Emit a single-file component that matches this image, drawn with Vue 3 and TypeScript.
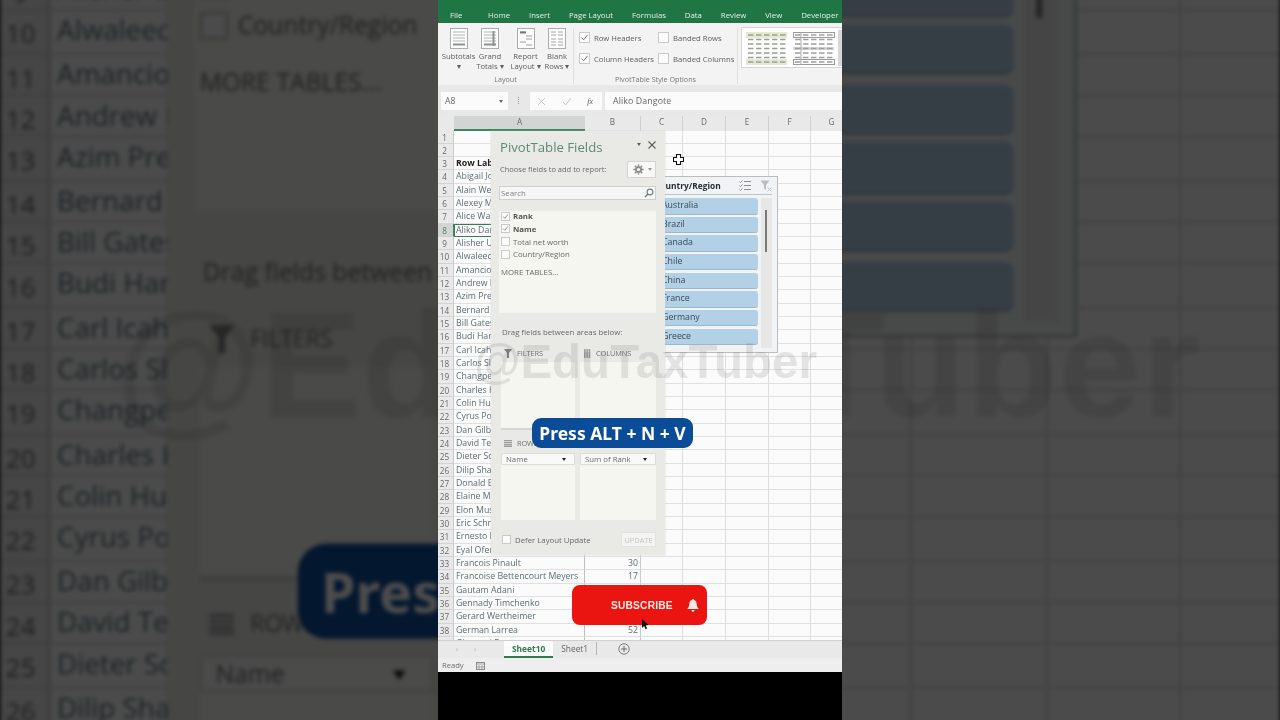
<script setup lang="ts">
const layers: string[] = ['back', 'front']
const tabs: string[] = ['File', 'Home', 'Insert', 'Page Layout', 'Formulas', 'Data', 'Review', 'View', 'Developer']
const names: string[] = ['', '', 'Row Labels', 'Abigail Johnson', 'Alain Wertheimer', 'Alexey Mordashov', 'Alice Walton', 'Aliko Dangote', 'Alisher Usmanov', 'Alwaleed Bin Talal', 'Amancio Ortega', 'Andrew Forrest', 'Azim Premji', 'Bernard Arnault', 'Bill Gates', 'Budi Hartono', 'Carl Icahn', 'Carlos Slim', 'Changpeng Zhao', 'Charles Koch', 'Colin Huang', 'Cyrus Poonawalla', 'Dan Gilbert', 'David Tepper', 'Dieter Schwarz', 'Dilip Shanghvi', 'Donald Bren', 'Elaine Marshall', 'Elon Musk', 'Eric Schmidt', 'Ernesto Bertarelli', 'Eyal Ofer', 'Francois Pinault', 'Francoise Bettencourt Meyers', 'Gautam Adani', 'Gennady Timchenko', 'Gerard Wertheimer', 'German Larrea', 'Giovanni Ferrero']
const values: Record<number, string> = { 33: '30', 34: '17', 38: '52' }
const cols: string[] = ['A', 'B', 'C', 'D', 'E', 'F', 'G']
const countries: string[] = ['Australia', 'Brazil', 'Canada', 'Chile', 'China', 'France', 'Germany', 'Greece']
const fields = [
  { label: 'Rank', on: true },
  { label: 'Name', on: true },
  { label: 'Total net worth', on: false },
  { label: 'Country/Region', on: false }
]
const buttons = [
  { top: 'Subtotals', bottom: '▾', kind: 'sub' },
  { top: 'Grand', bottom: 'Totals ▾', kind: 'grand' },
  { top: 'Report', bottom: 'Layout ▾', kind: 'report' },
  { top: 'Blank', bottom: 'Rows ▾', kind: 'blank' }
]
const dashRows: number[] = [5, 9.5, 14, 18.5, 23, 27.5, 32]
</script>

<template>
  <div class="stage">
    <div v-for="layer in layers" :key="layer" class="frame" :class="layer">
      <nav class="tabbar">
        <span v-for="t in tabs" :key="t" class="tab">{{ t }}</span>
      </nav>

      <section class="ribbon">
        <div class="group layout-group">
          <div class="btns">
            <div v-for="b in buttons" :key="b.kind" class="rbtn" :class="b.kind">
              <svg width="18" height="21" viewBox="0 0 18 21">
                <rect x=".5" y=".5" width="17" height="20" fill="#fbfbfb" stroke="#a9adab" />
                <g v-if="b.kind === 'sub' || b.kind === 'grand'" stroke="#b4b8b6" stroke-width="1">
                  <path d="M3 4h12M3 7h12M3 10h12M3 13h12" />
                  <path d="M3 16.5h12" stroke="#8d9290" stroke-width="2" />
                  <path v-if="b.kind === 'grand'" d="M12.5 3v15" stroke="#8d9290" stroke-width="2" />
                </g>
                <g v-else-if="b.kind === 'report'" stroke="#9ca09e">
                  <path d="M3 4h6M9 8h6M9 11h6M3 14h6M9 17h6" />
                  <path d="M3 4.5h6" stroke-width="2" stroke="#777b79" />
                </g>
                <g v-else stroke="#a5a9a7">
                  <path d="M3 4h5M10 4h5M3 7h5M10 7h5M3 11h5M10 11h5M3 14h5M10 14h5M3 17h5M10 17h5" />
                </g>
              </svg>
              <span class="rlabel">{{ b.top }}</span>
              <span class="rlabel">{{ b.bottom }}</span>
            </div>
          </div>
          <span class="gname">Layout</span>
        </div>

        <div class="group style-group">
          <div class="opts">
            <label class="opt"><i class="cb on"><svg width="9" height="9" viewBox="0 0 9 9"><path d="M1.5 4.6 3.6 6.8 7.6 1.8" fill="none" stroke="#777" /></svg></i>Row Headers</label>
            <label class="opt"><i class="cb"></i>Banded Rows</label>
            <label class="opt"><i class="cb on"><svg width="9" height="9" viewBox="0 0 9 9"><path d="M1.5 4.6 3.6 6.8 7.6 1.8" fill="none" stroke="#777" /></svg></i>Column Headers</label>
            <label class="opt"><i class="cb"></i>Banded Columns</label>
          </div>
          <span class="gname">PivotTable Style Options</span>
        </div>

        <div class="gallery">
          <svg class="thumb" width="45" height="36" viewBox="0 0 45 36">
            <rect x="1" y="2" width="41" height="6" fill="#e4ead2" />
            <rect x="1" y="29" width="41" height="6" fill="#e4ead2" />
            <line v-for="y in dashRows" :key="y" x1="3" x2="42" :y1="y" :y2="y" stroke="#9aa096" stroke-width="1.6" stroke-dasharray="5.5 2.5" />
          </svg>
          <svg class="thumb" width="45" height="36" viewBox="0 0 45 36">
            <rect x="1.5" y="2.5" width="41" height="5" fill="none" stroke="#999" />
            <rect x="1.5" y="29.5" width="41" height="5" fill="none" stroke="#999" />
            <rect x="1" y="17" width="41" height="3" fill="#d4d6d5" />
            <line x1="9" x2="9" y1="2" y2="35" stroke="#aaa" />
            <line v-for="y in dashRows" :key="y" x1="3" x2="42" :y1="y" :y2="y" stroke="#9c9f9d" stroke-width="1.6" stroke-dasharray="5.5 2.5" />
          </svg>
          <span class="thumb-third"></span>
        </div>
      </section>

      <section class="formula">
        <div class="namebox"><span>A8</span><b class="caret"></b></div>
        <span class="fdots"></span>
        <div class="fxbox">
          <svg width="9" height="9" viewBox="0 0 9 9"><path d="M1 1 8 8M8 1 1 8" stroke="#c4c4c4" /></svg>
          <svg width="10" height="9" viewBox="0 0 10 9"><path d="M1 5 3.500 8 9 1" fill="none" stroke="#c4c4c4" /></svg>
          <em>fx</em>
        </div>
        <div class="finput">Aliko Dangote</div>
      </section>

      <div class="colhead">
        <span class="corner"></span>
        <span v-for="c in cols" :key="c" class="ch" :class="'c' + c">{{ c }}</span>
      </div>

      <div class="grid">
        <div v-for="(name, i) in names" :key="i" class="row" :class="{ selrow: i === 7 }">
          <span class="rh">{{ i + 1 }}</span>
          <span class="cell cA" :class="{ head: i === 2, sel: i === 7 }">{{ name }}</span>
          <span class="cell cB">{{ values[i + 1] }}</span>
          <span class="cell cC"></span>
          <span class="cell cD"></span>
          <span class="cell cE"></span>
          <span class="cell cF"></span>
          <span class="cell cG"></span>
        </div>
      </div>

      <footer class="sheets">
        <span class="nav">‹</span><span class="nav">›</span>
        <span class="stab active">Sheet10</span>
        <span class="stab">Sheet1</span>
        <span class="sdiv"></span>
        <svg class="plus" width="12" height="12" viewBox="0 0 12 12"><circle cx="6" cy="6" r="5.2" fill="none" stroke="#7d7d7d" /><path d="M6 3v6M3 6h6" stroke="#6d6d6d" /></svg>
      </footer>
      <footer class="status">
        <span>Ready</span>
        <svg width="9" height="9" viewBox="0 0 9 9"><rect x=".5" y="1.500" width="8" height="7" fill="none" stroke="#8a8a8a" /><path d="M1 3h7M3 4v4M6 4v4M1 6h7" stroke="#8a8a8a" stroke-width=".7" /></svg>
      </footer>
      <div class="blackout"></div>

      <!-- floating over the sheet -->
      <aside class="slicer">
        <header class="slhead">
          <b>Country/Region</b>
          <svg class="slicon" width="12" height="11" viewBox="0 0 12 11"><path d="M5 1.500h7M5 5.500h7M5 9.500h7M.5 1.500l1 1 2-2M.5 5.500l1 1 2-2M.5 9.500l1 1 2-2" fill="none" stroke="#8b9097" /></svg>
          <svg class="slicon" width="12" height="12" viewBox="0 0 12 12"><path d="M.5 .5h9L6 5v5L4 8.500V5Z" fill="#b9bcc0" /><path d="M7.500 7.500l4 4M11.500 7.500l-4 4" stroke="#c5c7ca" /></svg>
        </header>
        <div class="slbody">
          <ul class="sllist">
            <li v-for="c in countries" :key="c">{{ c }}</li>
          </ul>
          <div class="sltrack"><span class="slthumb"></span></div>
        </div>
      </aside>

      <aside class="pane">
        <header class="phead">
          <h1>PivotTable Fields</h1>
          <b class="pcaret"></b>
          <svg width="8" height="8" viewBox="0 0 8 8"><path d="M.5 .5l7 7M7.500 .5l-7 7" stroke="#5f5f5f" stroke-width="1.100" /></svg>
        </header>
        <div class="pchoose">
          <span>Choose fields to add to report:</span>
          <div class="gear">
            <svg width="11" height="11" viewBox="0 0 11 11"><circle cx="5.500" cy="5.500" r="2.600" fill="none" stroke="#8f9190" stroke-width="2" /><path d="M5.500 .3v2M5.500 8.700v2M.3 5.500h2M8.700 5.500h2M1.800 1.800l1.400 1.400M7.800 7.800l1.400 1.400M1.800 9.200l1.400-1.400M7.800 3.200l1.400-1.400" stroke="#8f9190" stroke-width="1.300" /></svg>
            <b class="pcaret small"></b>
          </div>
        </div>
        <div class="psearch">
          <span>Search</span>
          <svg width="10" height="10" viewBox="0 0 10 10"><circle cx="6" cy="4" r="2.900" fill="none" stroke="#6f7b85" stroke-width="1.100" /><path d="M4 6 1 9" stroke="#6f7b85" stroke-width="1.500" /></svg>
        </div>
        <div class="plist">
          <div v-for="f in fields" :key="f.label" class="pfield" :class="{ on: f.on }">
            <i class="cb"><svg v-if="f.on" width="9" height="9" viewBox="0 0 9 9"><path d="M1.500 4.600 3.600 6.800 7.600 1.800" fill="none" stroke="#777" /></svg></i>
            <span>{{ f.label }}</span>
          </div>
          <p class="more">MORE TABLES...</p>
        </div>
        <p class="pdrag">Drag fields between areas below:</p>
        <div class="areas">
          <div class="area">
            <div class="alabel">
              <svg width="8" height="9" viewBox="0 0 8 9"><path d="M0 0h8L5 4v5H3V4Z" fill="#7b7f7d" /></svg>FILTERS
            </div>
            <div class="abox upper"></div>
          </div>
          <div class="area">
            <div class="alabel">
              <svg width="8" height="9" viewBox="0 0 8 9"><path d="M1 0h1.600v9H1ZM3.300 0h1.600v9H3.300ZM5.600 0h1.600v9H5.600Z" fill="#9a9d9b" /></svg>COLUMNS
            </div>
            <div class="abox upper"></div>
          </div>
          <div class="area">
            <div class="alabel lower">
              <svg width="8" height="7" viewBox="0 0 8 7"><path d="M0 0h8v1.200H0ZM0 2h8v1.200H0ZM0 4h8v1.200H0ZM0 5.800h8V7H0Z" fill="#9a9d9b" /></svg>ROWS
            </div>
            <div class="abox"><div class="chip"><span>Name</span><b class="pcaret dark"></b></div></div>
          </div>
          <div class="area">
            <div class="alabel lower"><svg width="8" height="7" viewBox="0 0 8 7"><path d="M0 0h8v1.500H2.500L5 3.500 2.500 5.500H8V7H0V5.800L3 3.500 0 1.200Z" fill="#9a9d9b" /></svg>VALUES</div>
            <div class="abox"><div class="chip"><span>Sum of Rank</span><b class="pcaret dark"></b></div></div>
          </div>
        </div>
        <div class="pfoot">
          <i class="cb"></i>
          <span>Defer Layout Update</span>
          <button type="button">UPDATE</button>
        </div>
      </aside>

      <svg class="crosshair" width="11" height="11" viewBox="0 0 11 11"><path d="M3.500 .5h4v3h3v4h-3v3h-4v-3h-3v-4h3Z" fill="#fff" stroke="#111" stroke-width="1.100" /></svg>

      <div class="watermark">@EduTaxTuber</div>
      <div class="pill">Press ALT + N + V</div>
      <div class="subscribe">
        <span>SUBSCRIBE</span>
        <svg width="12" height="13" viewBox="0 0 12 13"><path d="M6 0c.7 0 1 .5 1 1 2 .5 2.600 2 2.700 4 .1 2 .8 3.600 2.100 5H.2C1.500 8.600 2.200 7 2.300 5c.1-2 .7-3.500 2.700-4 0-.5.3-1 1-1ZM4.500 11h3c0 1-.6 1.800-1.500 1.800S4.500 12 4.500 11Z" fill="#f6e9e4" /></svg>
      </div>
      <svg class="arrow" width="8" height="11" viewBox="0 0 8 11"><path d="M1 0v9l2.200-2 1.400 3.300 1.500-.7L4.700 6.500 7.500 6Z" fill="#111" /></svg>
    </div>
  </div>
</template>

<style>
html, body { margin: 0; background: #000; }
</style>

<style scoped>
.stage {
  position: relative;
  width: 1280px;
  height: 720px;
  overflow: hidden;
  background: #000;
  font-family: "Open Sans", "Noto Sans", sans-serif;
}
.frame {
  width: 404px;
  height: 720px;
  display: flex;
  flex-direction: column;
  background: #fafafa;
  overflow: hidden;
}
.front {
  position: relative;
  margin: 0 auto;
  filter: blur(.35px);
}
.back {
  position: absolute;
  left: 438px;
  top: 0;
  transform: scale(3.168);
  filter: blur(.7px) brightness(.3);
}

.tabbar {
  flex: 0 0 23px;
  display: flex;
  align-items: flex-end;
  gap: 18.900px;
  padding: 0 0 2px 12px;
  box-sizing: border-box;
  background: #1f7544;
  color: #e6f0ea;
  font-size: 7.800px;
  line-height: 12px;
}
.tab { white-space: nowrap; }
.tab:first-child { margin-right: 6.800px; }

.ribbon {
  flex: 0 0 62px;
  display: flex;
  background: #f2f3f2;
  color: #5c5e5e;
  font-size: 7.700px;
  overflow: hidden;
}
.group {
  flex: none;
  box-sizing: border-box;
  display: flex;
  flex-direction: column;
  border-right: 1px solid #dfdfdf;
  margin: 5px 0 1px;
}
.gname {
  margin-top: auto;
  text-align: center;
  font-size: 7.200px;
  line-height: 10px;
  color: #777;
}
.layout-group { width: 136px; }
.btns { display: flex; padding-left: 3px; }
.rbtn {
  display: flex;
  flex-direction: column;
  align-items: center;
  line-height: 10px;
  white-space: nowrap;
}
.rbtn svg { margin-bottom: 2px; }
.sub { width: 35px; }
.grand { width: 28px; }
.report { width: 43px; }
.blank { width: 20px; }
.style-group { width: 164px; }
.opts {
  display: grid;
  grid-template-columns: 79px auto;
  grid-auto-rows: 21px;
  margin-top: -1px;
  padding: 0 0 0 5px;
}
.opt {
  display: flex;
  align-items: center;
  gap: 3px;
  white-space: nowrap;
}
.cb {
  flex: none;
  display: block;
  width: 9px;
  height: 9px;
  border: 1px solid #c9c9c7;
  background: #fbfbfb;
  margin-right: 1px;
  box-sizing: content-box;
  line-height: 0;
}
.gallery {
  flex: none;
  width: 110px;
  height: 41px;
  display: flex;
  gap: 2px;
  margin: 4px 0 0 3px;
  padding: 2px 0 0 3px;
  box-sizing: border-box;
  background: #fff;
  border: 1px solid #d5d5d5;
}
.thumb { flex: none; }
.thumb-third { flex: none; width: 8px; height: 36px; background: #d8d8d8; margin-left: -1px; }

.formula {
  flex: 0 0 31px;
  display: flex;
  align-items: flex-start;
  padding: 7px 0 0 3px;
  box-sizing: border-box;
  background: #e8e8e8;
  color: #666;
  font-size: 8.600px;
}
.namebox, .fxbox, .finput {
  height: 18px;
  display: flex;
  align-items: center;
  background: #fbfbfb;
  box-sizing: border-box;
}
.namebox { width: 67px; justify-content: space-between; padding: 0 5px 0 4px; }
.caret, .pcaret {
  display: block;
  width: 0;
  height: 0;
  border: 2.800px solid transparent;
  border-top: 3.200px solid #666;
  border-bottom: 0;
}
.fdots { width: 1px; height: 7px; margin: 5px 10px 0; border-left: 1px dotted #999; }
.fxbox { width: 72px; justify-content: space-between; padding: 0 9px 0 7px; margin-right: 3px; }
.fxbox em { color: #5f5f5f; font-family: "Liberation Serif", serif; font-size: 8px; }
.finput { flex: 1; padding-left: 8px; font-size: 8.800px; letter-spacing: .1px; }

.colhead {
  flex: 0 0 12.500px;
  display: flex;
  background: #e9e9e9;
  color: #6a6a6a;
  font-size: 8.200px;
  line-height: 12.500px;
}
.corner { flex: 0 0 16px; }
.ch { flex-shrink: 0; text-align: center; box-sizing: border-box; border-right: 1px solid #cfcfcf; }
.ch.cA { background: #d3d5d4; border-bottom: 2px solid #3f8460; color: #666; border-right: 0; }
.cA { flex: 0 0 131px; }
.cB { flex: 0 0 56px; }
.cC { flex: 0 0 42px; }
.cD { flex: 0 0 43px; }
.cE { flex: 0 0 43px; }
.cF { flex: 0 0 42px; }
.cG { flex: 0 0 42px; }

.grid { flex: 1; min-height: 0; overflow: hidden; background: #fbfbfb; }
.row {
  height: 13.330px;
  display: flex;
  font-size: 8.780px;
  line-height: 13px;
  color: #5b6d75;
}
.rh {
  flex: 0 0 16px;
  box-sizing: border-box;
  padding-right: 2px;
  text-align: center;
  background: #e9e9e9;
  border-bottom: 1px solid #d3d3d3;
  border-right: 1px solid #c9c9c9;
  color: #666;
  font-size: 8.200px;
}
.selrow .rh { background: #d3d5d4; color: #4f7d63; border-right: 1px solid #3f8460; }
.cell {
  flex-shrink: 0;
  box-sizing: border-box;
  border-right: 1px solid #dedede;
  border-bottom: 1px solid #e0e0e0;
  padding: 0 2px;
  white-space: nowrap;
  overflow: hidden;
}
.cell.cA { border-right: 1px solid #b8c0c6; }
.cell.cB { text-align: right; padding-right: 2px; border-right-color: #c8ccd0; }
.head { color: #222; font-weight: 700; }
.sel { outline: 1px solid #3a7a57; outline-offset: -1px; }

.sheets {
  flex: 0 0 18px;
  display: flex;
  align-items: flex-start;
  box-sizing: border-box;
  background: #e9e9e9;
  border-top: 1px solid #cfcfcf;
  color: #666;
  font-size: 8.400px;
  line-height: 16px;
}
.nav { width: 18px; text-align: center; color: #bbb; }
.nav:first-child { margin-left: 10px; }
.stab { padding: 0 8px; height: 17px; box-sizing: border-box; }
.stab.active {
  margin-left: 20px;
  background: #fbfbfb;
  color: #2c7a4d;
  font-weight: 700;
  border-bottom: 2px solid #2c7a4d;
}
.sdiv { width: 1px; height: 13px; background: #b6b6b6; margin-top: 1px; }
.plus { margin: 2px 0 0 21px; }
.status {
  flex: 0 0 14px;
  display: flex;
  align-items: center;
  gap: 12px;
  padding-left: 4px;
  background: #eeeeee;
  color: #6b6b6b;
  font-size: 7.600px;
}
.blackout { flex: 0 0 48px; background: #000; }

.slicer {
  position: absolute;
  left: 212px;
  top: 176px;
  width: 128px;
  height: 177px;
  box-sizing: border-box;
  padding: 0 5px 0 4px;
  background: #f1f3f4;
  border: 1px solid #b9bec2;
}
.slhead {
  height: 17px;
  display: flex;
  align-items: center;
  gap: 9px;
  border-bottom: 1px solid #b8c6d0;
  color: #233039;
  font-size: 8.400px;
}
.slhead b { flex: 1; white-space: nowrap; }
.slbody { display: flex; gap: 3px; padding-top: 3px; }
.sllist {
  list-style: none;
  margin: 0 0 0 -1px;
  padding: 0;
  width: 104px;
  flex: none;
  display: flex;
  flex-direction: column;
  gap: 2.170px;
}
.sllist li {
  height: 16.500px;
  box-sizing: border-box;
  padding-left: 8px;
  background: #b2d0e6;
  border-radius: 3px;
  border-bottom: 1px solid #9db7ca;
  color: #3b4a52;
  font-size: 8.800px;
  line-height: 15px;
}
.sltrack {
  flex: none;
  position: relative;
  width: 11px;
  height: 150px;
  background: #e6e7e6;
}
.slthumb {
  position: absolute;
  left: 4px;
  top: 12px;
  width: 2px;
  height: 42px;
  background: #77797b;
}

.pane {
  position: absolute;
  left: 53px;
  top: 131px;
  width: 174px;
  height: 424px;
  box-sizing: border-box;
  padding: 0 9px 0 8px;
  display: flex;
  flex-direction: column;
  background: #e9e9e6;
  color: #676a69;
  font-size: 7.800px;
  box-shadow: 0 0 1px #bbb;
}
.phead { height: 29px; display: flex; align-items: center; }
.phead h1 {
  flex: 1;
  margin: 3px 0 0 1px;
  font-size: 13.200px;
  font-weight: 400;
  color: #5c8a72;
  white-space: nowrap;
}
.phead svg { margin: 0 0 1px 7px; }
.pcaret { margin-bottom: 2px; border-top-color: #5d5d5d; }
.pcaret.small { margin: 0; border-top-color: #999; }
.pcaret.dark { margin: 0; border-top-color: #222; }
.pchoose { display: flex; align-items: center; justify-content: space-between; height: 18px; font-size: 7.500px; padding-left: 1px; }
.gear {
  width: 29px;
  height: 17px;
  display: flex;
  align-items: center;
  gap: 4px;
  padding-left: 5px;
  box-sizing: border-box;
  background: #f8f8f6;
  border: 1px solid #d4d4d2;
}
.psearch {
  height: 12px;
  margin-top: 8px;
  display: flex;
  align-items: center;
  justify-content: space-between;
  padding: 0 1px;
  background: #f6f6f4;
  border: 1px solid #cfcfce;
  color: #808280;
  font-size: 7.800px;
}
.plist {
  height: 102px;
  margin: 11px 0 0;
  padding-top: 0;
  background: #f5f6ef;
  box-sizing: border-box;
}
.pfield { display: flex; align-items: center; gap: 3px; height: 12.800px; padding-left: 2px; }
.pfield:first-child { margin-top: -1.400px; }
.pfield.on { font-weight: 700; color: #555; }
.pfield .cb { width: 7px; height: 7px; margin: 0; }
.pfield .cb svg { width: 7px; height: 7px; display: block; }
.more { margin: 5px 0 0 2px; font-size: 7.800px; line-height: 12px; }
.pdrag { margin: 13px 0 0 3px; line-height: 12px; font-size: 7.800px; }
.areas {
  display: grid;
  grid-template-columns: 74px 76px;
  justify-content: space-between;
  margin: 0 0 0 2px;
  width: 155px;
  padding-top: 9px;
}
.alabel {
  height: 12px;
  display: flex;
  align-items: center;
  gap: 5px;
  padding-left: 3px;
  font-size: 7.400px;
  letter-spacing: -.1px;
  color: #6d706e;
}
.alabel.lower { margin-top: 2px; height: 21px; padding-top: 1px; box-sizing: border-box; }
.abox {
  height: 67px;
  margin-top: 0;
  background: #f5f6ef;
}
.abox.upper { margin-top: 3px; height: 66px; border-bottom: 2px solid #d5d5d3; }
.chip {
  height: 12px;
  display: flex;
  align-items: center;
  justify-content: space-between;
  padding: 0 8px 0 4px;
  background: #f9f9f8;
  border: 1px solid #dcdcdb;
  box-sizing: border-box;
  font-size: 7.800px;
}
.pfoot {
  display: flex;
  align-items: center;
  margin-top: 12px;
  padding-left: 3px;
  gap: 4px;
  height: 15px;
}
.pfoot .cb { width: 7px; height: 7px; margin: 0; }
.pfoot span { flex: 1; }
.pfoot button {
  width: 35px;
  height: 15px;
  padding: 0;
  border: 1px solid #e2e2e0;
  background: #f4f4f2;
  color: #c2c4c2;
  font: inherit;
  font-size: 7.400px;
}

.crosshair { position: absolute; left: 235px; top: 154px; }
.watermark {
  position: absolute;
  left: 0;
  right: 0;
  top: 336px;
  padding-left: 11px;
  text-align: center;
  color: rgba(95, 95, 95, .15);
  font-family: "Liberation Sans", Arial, sans-serif;
  font-weight: 700;
  font-size: 47.500px;
  line-height: 52px;
  white-space: nowrap;
  pointer-events: none;
}
.pill {
  position: absolute;
  left: 94px;
  top: 418px;
  width: 161px;
  height: 30px;
  display: flex;
  align-items: center;
  justify-content: center;
  border-radius: 9px;
  background: #0b4c99;
  color: #fff;
  font-family: "Noto Sans", "Open Sans", sans-serif;
  font-weight: 700;
  font-size: 17.500px;
  white-space: nowrap;
}
.subscribe {
  position: absolute;
  left: 134px;
  top: 585px;
  width: 135px;
  height: 40px;
  box-sizing: border-box;
  padding: 0 8px 0 39px;
  display: flex;
  align-items: center;
  justify-content: space-between;
  border-radius: 8px;
  background: #ea1410;
  color: #f8ece8;
  font-family: "Liberation Sans", Arial, sans-serif;
  font-weight: 700;
  font-size: 10.200px;
  letter-spacing: .2px;
}
.arrow { position: absolute; left: 203px; top: 619px; }
</style>
